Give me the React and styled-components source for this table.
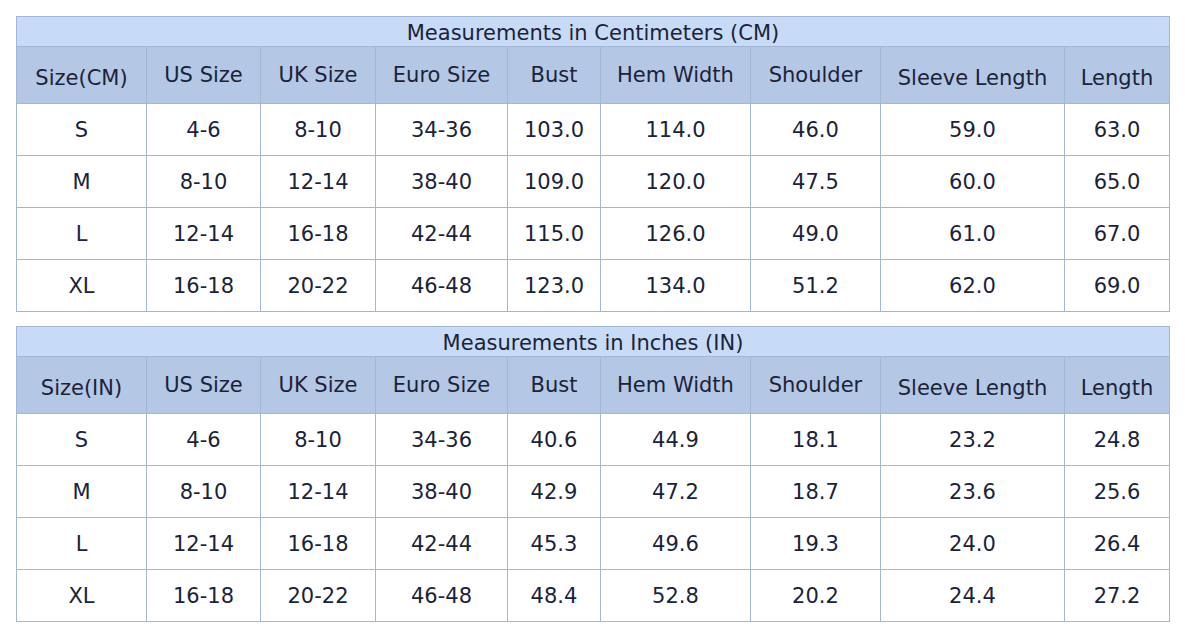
import React from "react";
import styled, { createGlobalStyle } from "styled-components";

const Global = createGlobalStyle`
  html, body { margin: 0; padding: 0; background: #fff; }
  body { font-family: "DejaVu Sans", Verdana, sans-serif; color: #1b2339; }
`;

const Page = styled.div`
  padding: 16px 0 0 16px;
  display: flex;
  flex-direction: column;
  gap: 14px;
`;

const Table = styled.table`
  border-collapse: collapse;
  table-layout: fixed;
  width: 1154px;
  font-size: 21px;
  color: #1b2339;
`;

const TitleCell = styled.th`
  height: 25px;
  padding: 4px 0 0;
  background: #c8dbf6;
  border: 1px solid #a3b6d3;
  font-weight: normal;
  text-align: center;
  vertical-align: middle;
  line-height: 25px;
`;

const HeadCell = styled.th`
  height: ${(p) => (p.$low ? "50px" : "56px")};
  padding: ${(p) => (p.$low ? "6px 0 0" : "0")};
  background: #b4c7e5;
  border: 1px solid #a3b6d3;
  font-weight: normal;
  text-align: center;
  vertical-align: middle;
  white-space: nowrap;
`;

const Cell = styled.td`
  height: 51px;
  padding: 0;
  border: 1px solid #a3b6d3;
  text-align: center;
  vertical-align: middle;
  background: #fff;
`;

const widths = [130, 114, 115, 132, 93, 150, 130, 184, 105];

const headers = (unit) => [
  { t: `Size(${unit})`, low: true },
  { t: "US Size" },
  { t: "UK Size" },
  { t: "Euro Size" },
  { t: "Bust" },
  { t: "Hem Width" },
  { t: "Shoulder" },
  { t: "Sleeve Length", low: true },
  { t: "Length", low: true },
];

const cmRows = [
  ["S", "4-6", "8-10", "34-36", "103.0", "114.0", "46.0", "59.0", "63.0"],
  ["M", "8-10", "12-14", "38-40", "109.0", "120.0", "47.5", "60.0", "65.0"],
  ["L", "12-14", "16-18", "42-44", "115.0", "126.0", "49.0", "61.0", "67.0"],
  ["XL", "16-18", "20-22", "46-48", "123.0", "134.0", "51.2", "62.0", "69.0"],
];

const inRows = [
  ["S", "4-6", "8-10", "34-36", "40.6", "44.9", "18.1", "23.2", "24.8"],
  ["M", "8-10", "12-14", "38-40", "42.9", "47.2", "18.7", "23.6", "25.6"],
  ["L", "12-14", "16-18", "42-44", "45.3", "49.6", "19.3", "24.0", "26.4"],
  ["XL", "16-18", "20-22", "46-48", "48.4", "52.8", "20.2", "24.4", "27.2"],
];

function SizeTable({ title, unit, rows }) {
  return (
    <Table>
      <colgroup>
        {widths.map((w, i) => (
          <col key={i} style={{ width: w }} />
        ))}
      </colgroup>
      <thead>
        <tr>
          <TitleCell colSpan={9}>{title}</TitleCell>
        </tr>
        <tr>
          {headers(unit).map((h, i) => (
            <HeadCell key={i} $low={h.low}>
              {h.t}
            </HeadCell>
          ))}
        </tr>
      </thead>
      <tbody>
        {rows.map((r, i) => (
          <tr key={i}>
            {r.map((c, j) => (
              <Cell key={j}>{c}</Cell>
            ))}
          </tr>
        ))}
      </tbody>
    </Table>
  );
}

export default function App() {
  return (
    <>
      <Global />
      <Page>
        <SizeTable title="Measurements in Centimeters (CM)" unit="CM" rows={cmRows} />
        <SizeTable title="Measurements in Inches (IN)" unit="IN" rows={inRows} />
      </Page>
    </>
  );
}
